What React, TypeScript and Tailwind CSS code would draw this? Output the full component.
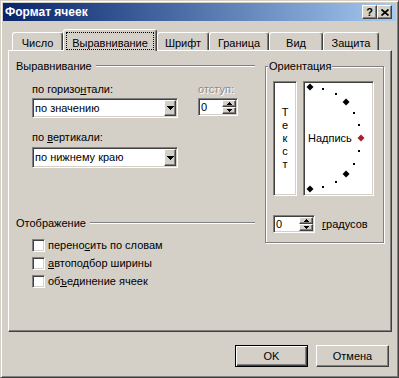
import React from 'react'

const FONT = "font-['Liberation_Sans',Arial,sans-serif]"
const RAISED =
  'border border-t-white border-l-white border-r-[#404040] border-b-[#404040] shadow-[inset_-1px_-1px_0_#808080]'
const SUNKEN =
  'border border-t-[#808080] border-l-[#808080] border-r-white border-b-white shadow-[inset_1px_1px_0_#404040,inset_-1px_-1px_0_#d4d0c8] p-[1px]'

function DownTri() {
  return (
    <svg width="7" height="4" viewBox="0 0 7 4" shapeRendering="crispEdges">
      <path d="M0 0h7v1H0zM1 1h5v1H1zM2 2h3v1H2zM3 3h1v1H3z" fill="#000" />
    </svg>
  )
}

function SmallTri({ up }: { up?: boolean }) {
  return (
    <svg width="5" height="3" viewBox="0 0 5 3" shapeRendering="crispEdges">
      <path d={up ? 'M2 0h1v1H2zM1 1h3v1H1zM0 2h5v1H0z' : 'M0 0h5v1H0zM1 1h3v1H1zM2 2h1v1H2z'} fill="#000" />
    </svg>
  )
}

function Combo({ value, className }: { value: string; className: string }) {
  return (
    <div className={`${SUNKEN} flex bg-white ${className}`}>
      <span className="flex flex-1 items-center pl-[1px]">{value}</span>
      <span className={`${RAISED} flex w-[12px] items-center justify-center bg-[#d4d0c8]`}>
        <DownTri />
      </span>
    </div>
  )
}

function Spin({ value, className }: { value: string; className: string }) {
  return (
    <div className={`${SUNKEN} flex h-[18px] bg-white ${className}`}>
      <span className="flex flex-1 items-center pl-[1px]">{value}</span>
      <div className="flex w-[14px] flex-col">
        <span className={`${RAISED} flex flex-1 items-center justify-center bg-[#d4d0c8]`}><SmallTri up /></span>
        <span className={`${RAISED} flex flex-1 items-center justify-center bg-[#d4d0c8]`}><SmallTri /></span>
      </div>
    </div>
  )
}

function Check({ children, className }: { children: React.ReactNode; className: string }) {
  return (
    <div className={`flex items-center gap-[3px] ${className}`}>
      <span className={`${SUNKEN} h-[13px] w-[13px] bg-white`} />
      <span>{children}</span>
    </div>
  )
}

function GroupHeader({ label, className = '' }: { label: string; className?: string }) {
  return (
    <div className={`flex items-center gap-[4px] ${className}`}>
      <span>{label}</span>
      <span className="mb-[2px] h-[2px] flex-1 border-t border-b border-t-[#808080] border-b-white" />
    </div>
  )
}

function Tab({ label, w, active }: { label: string; w: string; active?: boolean }) {
  if (active) {
    return (
      <div className={`relative z-10 -mb-px flex h-[22px] ${w} justify-center rounded-t-[3px] border-t border-l border-r border-t-white border-l-white border-r-[#404040] bg-[#d4d0c8] pt-[2px] shadow-[inset_-1px_0_0_#808080]`}>
        <span className="h-[18px] border border-dotted border-black px-[5px] pt-[4px]">{label}</span>
      </div>
    )
  }
  return (
    <div className={`h-[18px] ${w} rounded-t-[3px] border-t border-l border-r border-t-white border-l-white border-r-[#404040] pt-[4px] text-center shadow-[inset_-1px_0_0_#808080]`}>
      {label}
    </div>
  )
}

// positions on the orientation arc, centre (6,56), radius 51
const ARC = [90, 75, 60, 45, 30, 15, 0, -15, -30, -45, -60, -75, -90].map((deg) => {
  const r = (deg * Math.PI) / 180
  return { deg, x: 6 + 51 * Math.cos(r), y: 56 - 51 * Math.sin(r) }
})

function Dial() {
  return (
    <svg className="absolute inset-0" width="67" height="111" viewBox="0 0 67 111">
      {ARC.map(({ deg, x, y }) =>
        deg % 45 === 0 ? (
          <polygon
            key={deg}
            points={`${x},${y - 3.5} ${x + 3.5},${y} ${x},${y + 3.5} ${x - 3.5},${y}`}
            fill={deg === 0 ? '#a3202c' : '#000'}
          />
        ) : (
          <rect key={deg} x={Math.round(x) - 1} y={Math.round(y) - 1} width="2" height="2" fill="#000" />
        ),
      )}
    </svg>
  )
}

function CaptionBtn({ children }: { children: React.ReactNode }) {
  return (
    <span className={`${RAISED} flex h-[14px] w-[15px] items-center justify-center bg-[#d4d0c8] text-[11px] font-bold leading-none text-black`}>
      {children}
    </span>
  )
}

function DlgButton({ label, def }: { label: string; def?: boolean }) {
  const frame = def
    ? 'border border-black shadow-[inset_1px_1px_0_#fff,inset_-1px_-1px_0_#404040,inset_-2px_-2px_0_#808080]'
    : RAISED
  return <div className={`${frame} flex h-[22px] w-[73px] items-center justify-center`}>{label}</div>
}

export default function App() {
  return (
    <div className={`${FONT} flex h-[378px] w-[399px] select-none flex-col border border-t-[#d4d0c8] border-l-[#d4d0c8] border-r-[#404040] border-b-[#404040] bg-[#d4d0c8] p-[2px] text-[11px] leading-[13px] text-black shadow-[inset_1px_1px_0_#fff,inset_-1px_-1px_0_#808080]`}>
      <div className="flex h-[18px] items-center bg-linear-to-r from-[#0a246a] to-[#a6caf0] pl-[2px] pr-[4px]">
        <span className="flex-1 text-[12px] font-bold text-white">Формат ячеек</span>
        <CaptionBtn>?</CaptionBtn>
        <CaptionBtn>
          <svg width="8" height="7" viewBox="0 0 8 7">
            <path d="M0.5 0.5L7.5 6.5M7.5 0.5L0.5 6.5" stroke="#000" strokeWidth="1.7" />
          </svg>
        </CaptionBtn>
      </div>

      <div className="mt-[8px] flex h-[21px] items-end pl-[9px]">
        <Tab label="Число" w="w-[51px]" />
        <Tab label="Выравнивание" w="w-[94px]" active />
        <Tab label="Шрифт" w="w-[52px]" />
        <Tab label="Граница" w="w-[60px]" />
        <Tab label="Вид" w="w-[54px]" />
        <Tab label="Защита" w="w-[56px]" />
      </div>

      <div className="ml-[5px] flex h-[282px] w-[384px] border border-t-white border-l-white border-r-[#404040] border-b-[#404040] shadow-[inset_-1px_-1px_0_#808080]">
        <div className="w-[246px] pl-[7px] pt-[9px]">
          <GroupHeader label="Выравнивание" />
          <div className="mt-[10px] flex gap-[20px] pl-[16px]">
            <div className="flex w-[146px] flex-col">
              <span>
                по горизо<span className="underline">н</span>тали:
              </span>
              <Combo value="по значению" className="mt-[2px] h-[20px]" />
              <span className="mt-[13px]">
                по <span className="underline">в</span>ертикали:
              </span>
              <Combo value="по нижнему краю" className="mt-[3px] h-[21px]" />
            </div>
            <div className="flex flex-col">
              <span className="text-[#8c8c8c] [text-shadow:1px_1px_0_#fff]">отступ:</span>
              <Spin value="0" className="mt-[2px] w-[40px]" />
            </div>
          </div>

          <GroupHeader label="Отображение" className="mt-[49px]" />
          <div className="mt-[7px] flex flex-col pl-[16px]">
            <Check className="h-[17px]">
              перено<span className="underline">с</span>ить по словам
            </Check>
            <Check className="h-[18px]">
              <span className="underline">а</span>втоподбор ширины
            </Check>
            <Check className="h-[18px]">
              об<span className="underline">ъ</span>единение ячеек
            </Check>
          </div>
        </div>

        <div className="relative ml-[10px] mt-[15px] h-[177px] w-[119px] border border-[#808080] pb-[9px] pl-[7px] pt-[14px] shadow-[1px_1px_0_#fff,inset_1px_1px_0_#fff]">
          <span className="absolute -top-[7px] left-[2px] bg-[#d4d0c8] px-[1px]">Ориентация</span>
          <div className="flex gap-[6px]">
            <div className={`${SUNKEN} flex h-[115px] w-[24px] flex-col items-center justify-center bg-white`}>
              {'Текст'.split('').map((c, i) => (
                <span key={i}>{c}</span>
              ))}
            </div>
            <div className={`${SUNKEN} relative flex h-[115px] w-[71px] items-center bg-white pl-[4px]`}>
              <Dial />
              <span className="relative">Надпись</span>
            </div>
          </div>
          <div className="mt-[19px] flex items-center gap-[7px]">
            <Spin value="0" className="w-[42px]" />
            <span>
              <span className="underline">г</span>радусов
            </span>
          </div>
        </div>
      </div>

      <div className="mt-[13px] flex justify-end gap-[8px] pr-[7px]">
        <DlgButton label="OK" def />
        <DlgButton label="Отмена" />
      </div>
    </div>
  )
}
